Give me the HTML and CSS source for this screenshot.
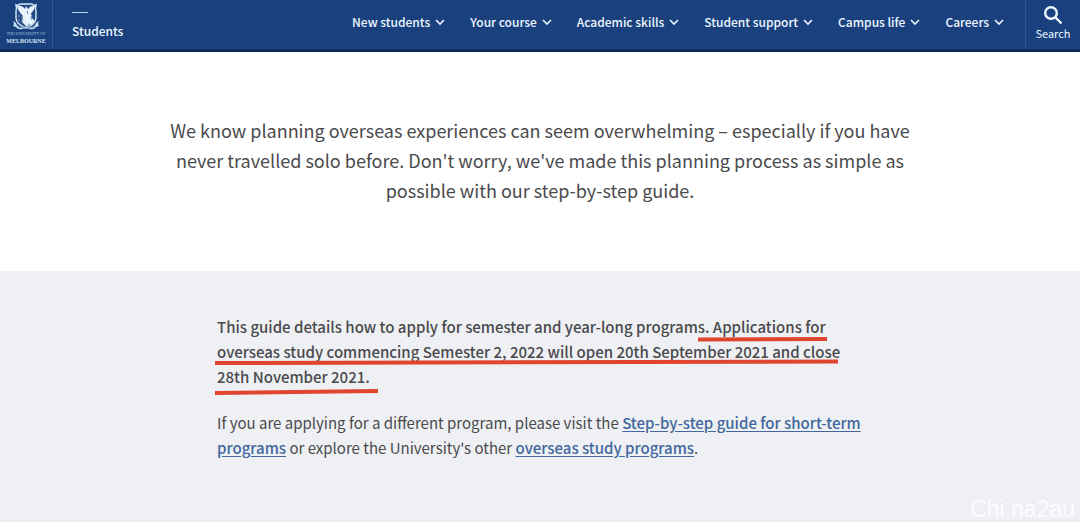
FILE: index.html
```html
<!DOCTYPE html>
<html lang="en">
<head>
<meta charset="utf-8">
<meta name="viewport" content="width=device-width, initial-scale=1">
<title>Students</title>
<link rel="stylesheet" href="styles.css">
</head>
<body>
<header class="header">
  <a class="logo" href="#" aria-label="The University of Melbourne">
    <svg class="crest" viewBox="0 0 28 28" aria-hidden="true">
      <path d="M4 2q2 1 4-1h12q2 2 4 1q-1 3 0 6v7q0 6-10 10Q4 21 4 15V8q1-3 0-6z" fill="#234987" stroke="#d5e8f8" stroke-width="1.4"/>
      <path d="M5 3q5-1 8 3l1-3 2 3q3-4 7-3-1 5-4 7l1 5 3 3-4 4-4 2-5-5 1-6Q6 8 5 3z" fill="#e8f4fc"/>
      <path d="M7 12v2m0 2v2m3-1v2m0-6v2m5-7 1 3m3 2 1 4m-4 4 3 3" stroke="#7097c4" stroke-width="1.2" fill="none"/>
      <path d="M1 18l3 2q1 4 5 4l5-1 5 1q4 0 5-4l3-2-1 3 1 2-3 1q-2 3-6 2l-4-1-4 1q-4 1-6-2l-3-1 1-2z" fill="#c9dff2"/>
      <path d="M6 24q4 1 8-.5 4 1.500 8 .5" fill="none" stroke="#527bad"/>
    </svg>
    <span class="logo-top">THE UNIVERSITY OF</span>
    <span class="logo-name">MELBOURNE</span>
  </a>
  <a class="site" href="#">Students</a>
  <nav class="nav" aria-label="Main">
    <button class="item" type="button">New students<svg class="chevron" viewBox="0 0 10 10"><path d="M1 3l4 4 4-4"/></svg></button>
    <button class="item" type="button">Your course<svg class="chevron" viewBox="0 0 10 10"><path d="M1 3l4 4 4-4"/></svg></button>
    <button class="item" type="button">Academic skills<svg class="chevron" viewBox="0 0 10 10"><path d="M1 3l4 4 4-4"/></svg></button>
    <button class="item" type="button">Student support<svg class="chevron" viewBox="0 0 10 10"><path d="M1 3l4 4 4-4"/></svg></button>
    <button class="item" type="button">Campus life<svg class="chevron" viewBox="0 0 10 10"><path d="M1 3l4 4 4-4"/></svg></button>
    <button class="item" type="button">Careers<svg class="chevron" viewBox="0 0 10 10"><path d="M1 3l4 4 4-4"/></svg></button>
  </nav>
  <button class="search" type="button">
    <svg class="lens" viewBox="0 0 20 20" aria-hidden="true"><circle cx="8" cy="8" r="5.800"/><path d="M12 12l6.500 6.500"/></svg>
    Search
  </button>
</header>
<main class="main">
  <section class="intro">
    <p class="lead">We know planning overseas experiences can seem overwhelming – especially if you have never travelled solo before. Don't worry, we've made this planning process as simple as possible with our step-by-step guide.</p>
  </section>
  <section class="guide">
    <div class="copy">
      <p class="notice">This guide details how to apply for semester and year-long programs. Applications for overseas study commencing Semester 2, 2022 will open 20th September 2021 and close 28th November 2021.</p>
      <p class="text">If you are applying for a different program, please visit the <a class="link" href="#">Step-by-step guide for short-term programs</a> or explore the University's other <a class="link" href="#">overseas study programs</a>.</p>
      <svg class="marks" viewBox="0 0 630 84" aria-hidden="true">
        <path d="M483 25.500L612 25M0 49L623 47.500M0 79L163 77"/>
      </svg>
    </div>
    <span class="watermark">Chi na2au</span>
  </section>
</main>
</body>
</html>
```
FILE: styles.css
```css
* {
  box-sizing: border-box;
}

body {
  margin: 0;
  min-height: 100vh;
  display: flex;
  flex-direction: column;
  font-family: "Noto Sans CJK SC", "Noto Sans", sans-serif;
  color: #4a4a4d;
  background: #fff;
}

.header {
  display: flex;
  align-items: stretch;
  height: 52px;
  border-bottom: 3px solid #0d2b58;
  background: #1a417e;
  color: #edf7ff;
}

.logo {
  display: flex;
  flex-direction: column;
  align-items: center;
  width: 53px;
  padding-top: 3px;
  border-right: 1px solid #315a91;
  color: #d5e6f7;
  font-family: "Liberation Serif", serif;
  text-decoration: none;
}

.crest {
  width: 28px;
  height: 28px;
}

.logo-top {
  font-size: 4px;
  line-height: 5px;
  color: #a9c4e2;
}

.logo-name {
  font-size: 6px;
  font-weight: 700;
  line-height: 10px;
}

.site {
  display: flex;
  flex-direction: column;
  gap: 8px;
  padding: 12px 0 0 19px;
  color: inherit;
  font-size: 12px;
  font-weight: 500;
  line-height: 20px;
  text-decoration: none;
}

.site::before {
  content: "";
  width: 16px;
  height: 1px;
  background: #b5d3ec;
}

.nav {
  display: flex;
  gap: 25px;
  margin-left: auto;
  padding: 0 21px 5px 0;
}

.item,
.search {
  padding: 0;
  border: 0;
  background: none;
  color: inherit;
  font: 500 12px/20px "Noto Sans CJK SC", "Noto Sans", sans-serif;
  white-space: nowrap;
}

.item {
  display: flex;
  align-items: center;
  gap: 5px;
}

.chevron {
  width: 10px;
  height: 10px;
  fill: none;
  stroke: currentColor;
  stroke-width: 1.6;
}

.search {
  display: flex;
  flex-direction: column;
  align-items: center;
  width: 55px;
  padding-top: 5px;
  border-left: 1px solid #315a91;
  font-size: 11px;
  font-weight: 400;
  line-height: 16px;
}

.lens {
  width: 20px;
  height: 20px;
  fill: none;
  stroke: currentColor;
  stroke-width: 2.4;
}

.main {
  flex: 1;
  display: flex;
  flex-direction: column;
}

.intro {
  padding: 63px 24px 66px;
}

.lead {
  max-width: 750px;
  margin: 0 auto;
  font-size: 18px;
  line-height: 30px;
  text-align: center;
}

.guide {
  position: relative;
  flex: 1;
  padding: 43px 24px;
  background: #eef0f3;
}

.copy {
  position: relative;
  max-width: 646px;
  margin: 0 auto;
  font-size: 15px;
  line-height: 25px;
}

.notice {
  margin: 0 0 21px;
  font-weight: 500;
}

.text {
  margin: 0;
}

.link {
  color: #41679d;
  font-weight: 500;
  text-underline-offset: 2px;
}

.marks {
  position: absolute;
  top: 0;
  left: -2px;
  width: 630px;
  height: 84px;
  fill: none;
  stroke: #e0452f;
  stroke-width: 4;
}

.watermark {
  position: absolute;
  right: 5px;
  bottom: 0;
  color: #fcfdff;
  font-family: "Liberation Sans", sans-serif;
  font-size: 23px;
  line-height: 26px;
}
```
